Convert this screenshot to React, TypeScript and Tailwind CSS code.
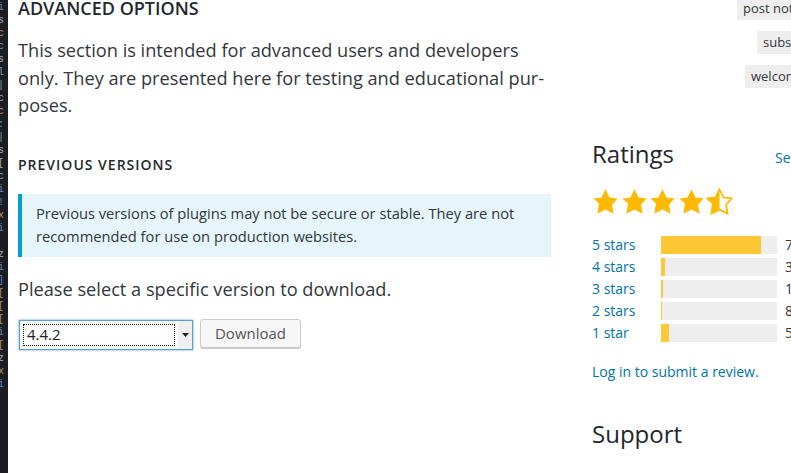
import type { ReactNode } from "react";

const STAR =
  "M10 1l3 6 6 .75-4.12 4.62L16 19l-6-3-6 3 1.13-7.63L1 7.75 7 7z";

const editorGlyphs: { ch: string; color: string }[] = [
  { ch: "i", color: "#6f9fd8" },
  { ch: "s", color: "#c9c9c9" },
  { ch: "c", color: "#d9b36a" },
  { ch: "c", color: "#8fb4e0" },
  { ch: "s", color: "#c9c9c9" },
  { ch: "l", color: "#8fb4e0" },
  { ch: "|", color: "#9cc3a0" },
  { ch: "c", color: "#c9c9c9" },
  { ch: "c", color: "#d9b36a" },
  { ch: ":", color: "#8fb4e0" },
  { ch: "|", color: "#9cc3a0" },
  { ch: "s", color: "#c9c9c9" },
  { ch: "[", color: "#c9c9c9" },
  { ch: "c", color: "#8fb4e0" },
  { ch: "i", color: "#6f9fd8" },
  { ch: "!", color: "#6f9fd8" },
  { ch: "x", color: "#d9b36a" },
  { ch: "i", color: "#6f9fd8" },
  { ch: " ", color: "#c9c9c9" },
  { ch: "z", color: "#c9c9c9" },
  { ch: "i", color: "#6f9fd8" },
  { ch: "]", color: "#6f9fd8" },
  { ch: "[", color: "#d9b36a" },
  { ch: "[", color: "#d9b36a" },
  { ch: "[", color: "#d9b36a" },
  { ch: "i", color: "#6f9fd8" },
  { ch: "[", color: "#d9b36a" },
  { ch: "z", color: "#c9c9c9" },
  { ch: "x", color: "#d9b36a" },
  { ch: "i", color: "#6f9fd8" },
  { ch: " ", color: "#c9c9c9" },
  { ch: " ", color: "#c9c9c9" },
  { ch: " ", color: "#c9c9c9" },
  { ch: " ", color: "#c9c9c9" },
  { ch: " ", color: "#c9c9c9" },
  { ch: " ", color: "#c9c9c9" },
];

const ratings = [
  { label: "5 stars", fill: 100, count: "79" },
  { label: "4 stars", fill: 4, count: "3" },
  { label: "3 stars", fill: 2, count: "1" },
  { label: "2 stars", fill: 1, count: "8" },
  { label: "1 star", fill: 8, count: "5" },
];

function Star({ half = false }: { half?: boolean }) {
  return (
    <svg width="27" height="27" viewBox="0 0 20 20">
      {half ? (
        <>
          <defs>
            <clipPath id="left-half">
              <rect x="0" y="0" width="10" height="20" />
            </clipPath>
          </defs>
          <path d={STAR} fill="#ffb900" clipPath="url(#left-half)" />
          <path d={STAR} fill="none" stroke="#ffb900" strokeWidth="1.3" strokeLinejoin="miter" />
        </>
      ) : (
        <path d={STAR} fill="#ffb900" />
      )}
    </svg>
  );
}

function Tag({ children, offset }: { children: ReactNode; offset: string }) {
  return (
    <div className={`${offset} w-fit whitespace-nowrap rounded-[2px] bg-[#eeeeee] px-[6px] py-[2px] text-[13px] leading-[19px] text-[#32373c]`}>
      {children}
    </div>
  );
}

export default function App() {
  return (
    <div
      className="flex h-[473px] w-[791px] overflow-hidden bg-white text-[#32373c]"
      style={{ fontFamily: '"Open Sans", "Noto Sans", sans-serif' }}
    >
      {/* editor sliver on the far left */}
      <div className="flex w-[8px] shrink-0 flex-col overflow-hidden bg-[#1c1d24] pt-[1px]">
        {editorGlyphs.map((g, i) => (
          <span
            key={i}
            className="ml-[-2px] block h-[13px] font-['Liberation_Mono',monospace] text-[10px] leading-[13px] opacity-80"
            style={{ color: g.color }}
          >
            {g.ch}
          </span>
        ))}
      </div>

      <div className="flex shrink-0 gap-[41px] pl-[10px]">
        {/* main column */}
        <div className="w-[533px] shrink-0">
          <h2 className="mt-[-4px] text-[18px] font-semibold uppercase leading-[24px] text-[#23282d]">
            Advanced Options
          </h2>
          <p className="mt-[17px] text-[18.2px] leading-[27.5px]" lang="en">
            This section is intended for advanced users and developers only. They are presented here for testing and educational pur&shy;poses.
          </p>

          <h3 className="mt-[35px] text-[14px] font-semibold uppercase leading-[20px] tracking-[1px] text-[#23282d]">
            Previous Versions
          </h3>

          <div className="mt-[19px] border-l-4 border-[#00a0d2] bg-[#e5f5fa] pb-[9px] pl-[14px] pr-[12px] pt-[8px] text-[14.7px] leading-[23px]">
            Previous versions of plugins may not be secure or stable. They are not recommended for use on production websites.
          </div>

          <p className="mt-[18px] text-[18.2px] leading-[28px]">
            Please select a specific version to download.
          </p>

          <div className="mt-[16px] flex items-start gap-[7px]">
            <div className="ml-[1px] mt-[1px] flex h-[30px] w-[174px] items-stretch border border-[#5b9dd9] bg-white shadow-[0_0_2px_rgba(30,140,190,0.8)]">
              <div className="m-[3px] flex flex-1 items-center border border-dotted border-[#222] pl-[3px] text-[15px] text-[#222]">
                4.4.2
              </div>
              <div className="flex w-[14px] items-center justify-center bg-[#f0f0f0]">
                <svg width="7" height="4" viewBox="0 0 7 4">
                  <path d="M0 0h7L3.5 4z" fill="#222" />
                </svg>
              </div>
            </div>
            <button
              type="button"
              className="flex h-[29px] w-[101px] items-center justify-center rounded-[3px] border border-[#cccccc] bg-[#f7f7f7] text-[15px] text-[#555555] shadow-[0_1px_0_#cccccc]"
            >
              Download
            </button>
          </div>
        </div>

        {/* sidebar */}
        <div className="w-[225px] shrink-0">
          <div className="flex flex-col gap-[11px]">
            <div className="mt-[-3px]">
              <Tag offset="ml-[145px]">post notification</Tag>
            </div>
            <Tag offset="ml-[165px]">subscribe</Tag>
            <Tag offset="ml-[153px]">welcome</Tag>
          </div>

          <div className="mt-[48px] flex items-baseline justify-between">
            <h2 className="text-[24px] leading-[36px] text-[#23282d]">Ratings</h2>
            <a className="text-[14px] text-[#0073aa]">See all</a>
          </div>

          <div className="mt-[16px] flex gap-[1.5px]">
            <Star />
            <Star />
            <Star />
            <Star />
            <Star half />
          </div>

          <div className="mt-[21px] flex flex-col gap-[4px]">
            {ratings.map((r) => (
              <div key={r.label} className="flex items-center">
                <a className="w-[69px] text-[14px] leading-[18px] text-[#0073aa]">{r.label}</a>
                <div className="h-[18px] w-[116px] bg-[#eeeeee]">
                  <div className="h-full bg-[#ffc733]" style={{ width: `${r.fill}px` }} />
                </div>
                <span className="ml-[8px] text-[14px] leading-[18px] text-[#32373c]">{r.count}</span>
              </div>
            ))}
          </div>

          <a className="mt-[20px] block text-[14px] leading-[20px] text-[#0073aa]">
            Log in to submit a review.
          </a>

          <h2 className="mt-[34px] text-[24px] leading-[36px] text-[#23282d]">Support</h2>
        </div>
      </div>
    </div>
  );
}
